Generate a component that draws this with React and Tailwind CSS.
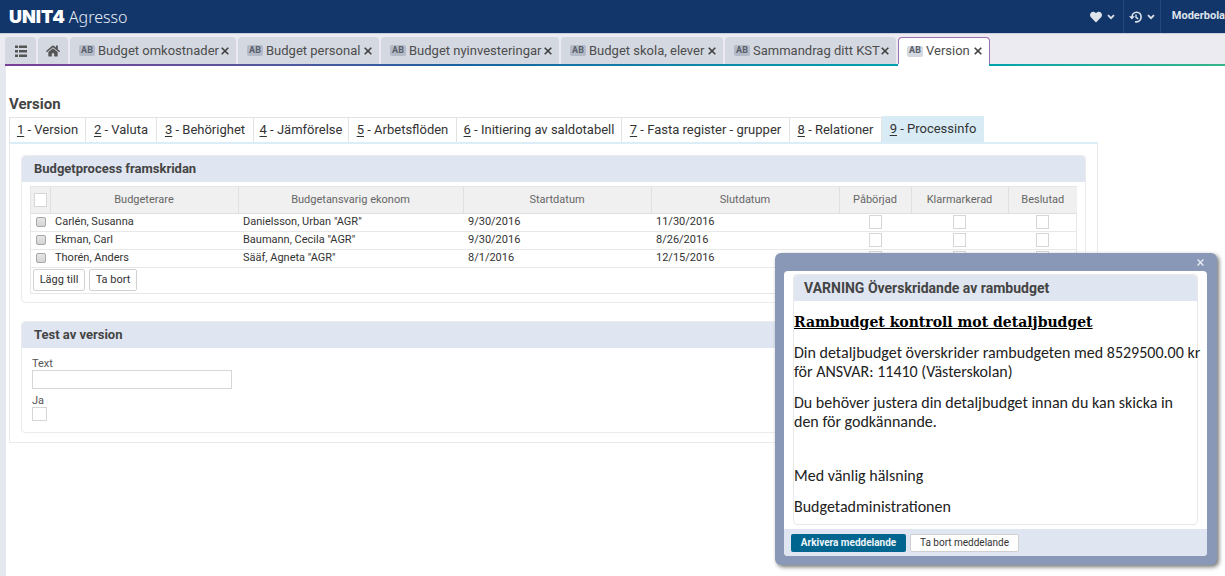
import React from "react";
import { FaHome, FaHeart } from "react-icons/fa";

const openTabs = [
  { label: "Budget omkostnader", width: "w-[166px]" },
  { label: "Budget personal", width: "w-[141px]" },
  { label: "Budget nyinvesteringar", width: "w-[178px]" },
  { label: "Budget skola, elever", width: "w-[162px]" },
  { label: "Sammandrag ditt KST", width: "w-[171px]" },
];

const steps = [
  { label: "Version", width: "w-[77px]" },
  { label: "Valuta", width: "w-[71px]" },
  { label: "Behörighet", width: "w-[97px]" },
  { label: "Jämförelse", width: "w-[95px]" },
  { label: "Arbetsflöden", width: "w-[108px]" },
  { label: "Initiering av saldotabell", width: "w-[165px]" },
  { label: "Fasta register - grupper", width: "w-[168px]" },
  { label: "Relationer", width: "w-[92px]" },
];

const rows = [
  { name: "Carlén, Susanna", economist: 'Danielsson, Urban "AGR"', start: "9/30/2016", end: "11/30/2016" },
  { name: "Ekman, Carl", economist: 'Baumann, Cecila "AGR"', start: "9/30/2016", end: "8/26/2016" },
  { name: "Thorén, Anders", economist: 'Sääf, Agneta "AGR"', start: "8/1/2016", end: "12/15/2016" },
];

function Chevron() {
  return (
    <svg viewBox="0 0 8 6" className="h-[6px] w-[8px]" fill="none" stroke="currentColor" strokeWidth="1.7" aria-hidden="true">
      <path d="M1 1.2 L4 4.2 L7 1.2" />
    </svg>
  );
}

function HistoryIcon() {
  return (
    <svg viewBox="0 0 13 12" className="h-3 w-[13px]" fill="none" stroke="currentColor" strokeWidth="1.6" aria-hidden="true">
      <path d="M3 6.4 C3 3.2 5 1.2 7.6 1.2 C10.3 1.2 12.1 3.4 12.1 6 C12.1 8.8 10.2 10.9 7.4 10.9 L6 10.7" />
      <path d="M7 3.4 V6.3 L9.2 7.9" strokeWidth="1.4" />
      <path d="M0 5.2 H5.8 L2.9 8.6 Z" fill="currentColor" stroke="none" />
    </svg>
  );
}

function ListIcon() {
  return (
    <svg viewBox="0 0 12 12" className="h-3 w-3" fill="currentColor" aria-hidden="true">
      <path d="M0 0.5 H3 V3 H0 Z M4 0.5 H12 V3 H4 Z M0 5 H3 V7.5 H0 Z M4 5 H12 V7.5 H4 Z M0 9.5 H3 V12 H0 Z M4 9.5 H12 V12 H4 Z" />
    </svg>
  );
}

function Cross({ className }) {
  return (
    <svg viewBox="0 0 8 8" className={className} fill="none" stroke="currentColor" strokeWidth="1.6" aria-hidden="true">
      <path d="M0.7 0.7 L7.3 7.3 M7.3 0.7 L0.7 7.3" />
    </svg>
  );
}

function WindowTab({ label, width, active }) {
  return (
    <div
      className={`flex h-full shrink-0 items-center rounded-t ${width} ${
        active ? "border border-b-0 border-[#9b6fae] bg-white pl-2" : "bg-[#d4d8e1] pl-[9px]"
      }`}
    >
      <a href="#" className="flex items-center gap-[3px] whitespace-nowrap text-[13px] text-[#4d4d4d]">
        <span
          className={`flex h-[11px] w-4 items-center justify-center rounded-[2px] text-[9px] font-bold text-[#5a5f6a] ${
            active ? "bg-[#d4d8e1]" : "bg-[#b4bac8]"
          }`}
        >
          AB
        </span>
        {label}
      </a>
      <button type="button" aria-label={`Stäng ${label}`} className="ml-auto mr-[7px] text-[#3f3f3f]">
        <Cross className="h-2 w-2" />
      </button>
    </div>
  );
}

function Box({ label }) {
  return (
    <input
      type="checkbox"
      aria-label={label}
      className="mx-auto block h-[14px] w-[13px] appearance-none border border-[#d6d6d6] bg-white"
    />
  );
}

function Section({ title, children, className }) {
  return (
    <section className={`rounded border border-[#ebebeb] ${className}`}>
      <h2 className="flex h-[26px] items-center rounded-t bg-[#e0e6f1] pl-3 text-[13px] font-bold text-[#444]">{title}</h2>
      {children}
    </section>
  );
}

function Dialog() {
  return (
    <div
      role="dialog"
      aria-labelledby="dialog-title"
      className="absolute right-2 top-[253px] w-[442px] rounded-md bg-[#8998b6] pb-[9px] pl-[9px] pr-[10px] shadow-[2px_2px_4px_rgba(0,0,0,0.55)]"
    >
      <div className="flex h-[18px] items-center justify-end pr-[3px] text-[#e8ecf4]">
        <button type="button" aria-label="Stäng">
          <Cross className="h-[7px] w-[7px]" />
        </button>
      </div>
      <div className="overflow-hidden rounded bg-white">
        <div className="mx-[9px] mb-1 mt-[3px] rounded border border-[#e8e8e8]">
          <h2
            id="dialog-title"
            className="flex h-[26px] items-center rounded-t bg-[#e0e6f1] pl-[10px] text-[14px] font-bold text-[#444]"
          >
            VARNING Överskridande av rambudget
          </h2>
          <div className="flex flex-col gap-3 whitespace-nowrap pb-2 pt-3 font-['Carlito','Lato',sans-serif] text-[16px] leading-[19px] text-[#222]">
            <h3 className="font-['DejaVu_Serif',serif] text-[14px] font-bold leading-[18px] text-black underline">
              Rambudget kontroll mot detaljbudget
            </h3>
            <p>
              Din detaljbudget överskrider rambudgeten med 8529500.00 kr
              <br />
              för ANSVAR: 11410 (Västerskolan)
            </p>
            <p>
              Du behöver justera din detaljbudget innan du kan skicka in
              <br />
              den för godkännande.
            </p>
            <p className="pt-[23px]">Med vänlig hälsning</p>
            <p>Budgetadministrationen</p>
          </div>
        </div>
        <div className="flex h-[27px] items-center gap-1 bg-[#e0e6f1] pl-[7px] text-[10px]">
          <button type="button" className="h-[18px] w-[115px] rounded-[2px] bg-[#00658f] font-bold text-[#eef5f9]">
            Arkivera meddelande
          </button>
          <button type="button" className="h-[18px] w-[109px] rounded-[2px] border border-[#cfcfcf] bg-white text-[#333]">
            Ta bort meddelande
          </button>
        </div>
      </div>
    </div>
  );
}

export default function App() {
  return (
    <div className="relative min-h-screen overflow-hidden bg-[#e6e8f0] font-['Roboto',sans-serif] text-[#333]">
      <header className="flex h-[33px] items-center justify-between overflow-hidden bg-[#13366a] pl-[9px] text-white">
        <div className="flex items-center gap-1">
          <span className="font-['Inter',sans-serif] text-[18px] font-black">UNIT4</span>
          <span className="font-['Noto_Sans',sans-serif] text-[16px] font-light text-[#e8edf5]">Agresso</span>
        </div>
        <div className="flex h-full text-[#dfe4ec]">
          <button type="button" aria-label="Favoriter" className="flex h-full w-[42px] items-center gap-[5px] pl-[9px]">
            <FaHeart className="h-3 w-3" />
            <Chevron />
          </button>
          <button
            type="button"
            aria-label="Historik"
            className="flex h-full w-[38px] items-center gap-[5px] border-x border-[#26477a] pl-[5px]"
          >
            <HistoryIcon />
            <Chevron />
          </button>
          <button type="button" className="h-full whitespace-nowrap pl-[11px] text-left text-[11px] font-bold">
            Moderbola
          </button>
        </div>
      </header>

      <nav className="flex h-[31px] gap-[2px] border-t border-[#c9cedb] bg-[#ebebf1] pl-[5px] pt-[3px] text-[#555]">
        <button type="button" aria-label="Meny" className="flex w-[31px] items-center justify-center rounded-t bg-[#d4d8e1]">
          <ListIcon />
        </button>
        <button type="button" aria-label="Hem" className="flex w-[30px] items-center justify-center rounded-t bg-[#d4d8e1]">
          <FaHome className="h-[14px] w-[14px]" />
        </button>
        {openTabs.map((tab) => (
          <WindowTab key={tab.label} {...tab} />
        ))}
        <WindowTab label="Version" width="w-[92px]" active />
      </nav>
      <div className="ml-[5px] flex h-[2px]">
        <div className="w-[893px] bg-linear-to-r from-[#7b3f98] via-[#1a62a0] to-[#00a3ad]" />
        <div className="w-[91px] bg-white" />
        <div className="flex-1 bg-linear-to-r from-[#00a3ad] to-[#35b58a]" />
      </div>

      <main className="ml-[6px] min-h-[510px] bg-white pl-[3px] pr-[127px] pt-[27px]">
        <h1 className="text-[15px] font-bold leading-[22px] text-[#444]">Version</h1>
        <nav className="mt-[2px] flex h-[25px] items-end whitespace-nowrap text-[13px]">
          {steps.map((step, i) => (
            <a
              key={step.label}
              href="#"
              className={`flex h-[25px] shrink-0 items-center justify-center border-r border-t border-[#e3e3e3] first:border-l ${step.width}`}
            >
              <span>
                <u className="underline-offset-2">{i + 1}</u> - {step.label}
              </span>
            </a>
          ))}
          <a href="#" className="flex h-[26px] w-[102px] shrink-0 items-center justify-center bg-[#d9ecf6]">
            <span>
              <u className="underline-offset-2">9</u> - Processinfo
            </span>
          </a>
        </nav>
        <div className="border border-t-2 border-[#ebebeb] border-t-[#dbeef7] px-[11px] pb-[9px] pt-[11px]">
          <Section title="Budgetprocess framskridan" className="pb-2">
            <div className="mx-2 mt-1 border border-[#e6e6e6]">
              <table className="w-full table-fixed border-collapse text-[11px]">
                <colgroup>
                  <col className="w-[19px]" />
                  <col className="w-[188px]" />
                  <col className="w-[225px]" />
                  <col className="w-[188px]" />
                  <col className="w-[188px]" />
                  <col className="w-[72px]" />
                  <col className="w-[97px]" />
                  <col className="w-[69px]" />
                </colgroup>
                <thead>
                  <tr className="h-[26px] bg-[#f0f0f0] text-[#666]">
                    <th className="border-b border-r border-[#e0e0e0] p-0">
                      <Box label="Markera alla" />
                    </th>
                    {["Budgeterare", "Budgetansvarig ekonom", "Startdatum", "Slutdatum", "Påbörjad", "Klarmarkerad", "Beslutad"].map((h) => (
                      <th key={h} className="border-b border-r border-[#e0e0e0] p-0 font-normal last:border-r-0">
                        {h}
                      </th>
                    ))}
                  </tr>
                </thead>
                <tbody>
                  {rows.map((row) => (
                    <tr key={row.name} className="h-[18px] border-b border-[#e8e8e8] leading-4">
                      <td className="p-0">
                        <input
                          type="checkbox"
                          aria-label={`Markera ${row.name}`}
                          className="mx-auto block h-[10px] w-[10px] appearance-none rounded-[2px] border border-[#a8a8a8] bg-linear-to-b from-[#e6e6e6] to-[#d4d4d4]"
                        />
                      </td>
                      <td className="p-0 pl-[5px]">{row.name}</td>
                      <td className="p-0 pl-[5px]">{row.economist}</td>
                      <td className="p-0 pl-[5px]">{row.start}</td>
                      <td className="p-0 pl-[5px]">{row.end}</td>
                      {["Påbörjad", "Klarmarkerad", "Beslutad"].map((h) => (
                        <td key={h} className="p-0">
                          <Box label={`${h}, ${row.name}`} />
                        </td>
                      ))}
                    </tr>
                  ))}
                </tbody>
              </table>
              <div className="flex h-[25px] items-center gap-1 pl-[2px] text-[11px]">
                <button type="button" className="h-[22px] w-[52px] rounded-[2px] border border-[#d2d2d2] bg-white">
                  Lägg till
                </button>
                <button type="button" className="h-[22px] w-[48px] rounded-[2px] border border-[#d2d2d2] bg-white">
                  Ta bort
                </button>
              </div>
            </div>
          </Section>
          <Section title="Test av version" className="mt-[18px]">
            <div className="flex flex-col items-start px-[10px] pb-[11px] pt-[9px] text-[11px] leading-[13px] text-[#555]">
              <label htmlFor="text-field">Text</label>
              <input id="text-field" type="text" className="h-[19px] w-[200px] border border-[#d6d6d6] bg-white px-1" />
              <label htmlFor="ja-box" className="mt-[5px]">
                Ja
              </label>
              <input id="ja-box" type="checkbox" className="block h-[14px] w-[15px] appearance-none border border-[#d6d6d6] bg-white" />
            </div>
          </Section>
        </div>
      </main>
      <Dialog />
    </div>
  );
}
